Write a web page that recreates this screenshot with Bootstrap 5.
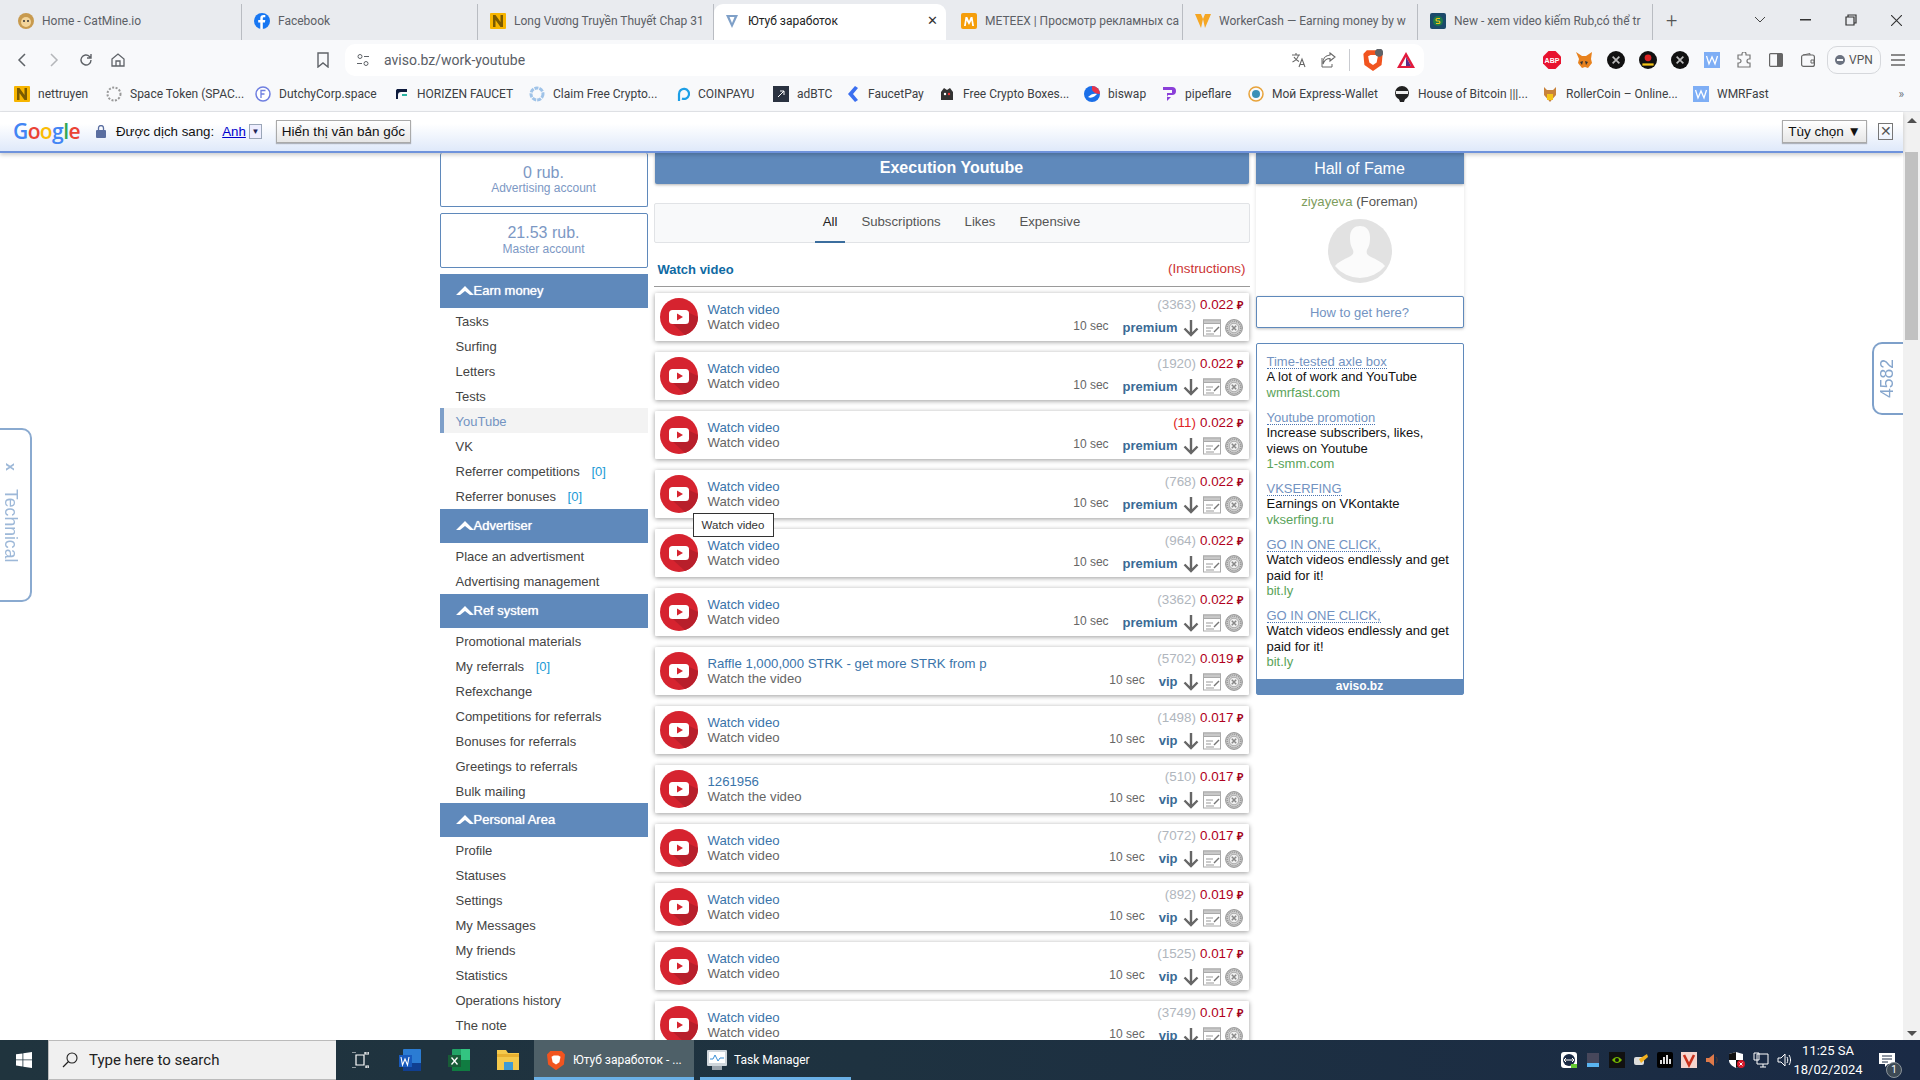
<!doctype html>
<html lang="en">
<head>
<meta charset="utf-8">
<title>Youtube work</title>
<link href="https://cdn.jsdelivr.net/npm/bootstrap@5.3.0/dist/css/bootstrap.min.css" rel="stylesheet">
<style>
html,body{height:100%;overflow:hidden}
body{width:1920px;height:1080px;font-family:"Liberation Sans",Arial,sans-serif;font-size:13px;color:#333;background:#fff;display:flex;flex-direction:column}
svg{display:block;flex:none}
.ui-font{font-family:Roboto,"Noto Sans",sans-serif}
/* tab strip */
.tabstrip{height:40px;background:#e9ebef;flex:none;display:grid;grid-template-columns:236px 236px 236px 235px 234px 235px 235px 21px 1fr;padding-left:6px;font-size:12px;color:#5c6066}
.tabcell{height:36px;margin-top:4px;padding:0 0 2px 12px;display:flex;align-items:center;gap:8px;border-right:1px solid #b9bcc2;white-space:nowrap;overflow:hidden;position:relative}
.tabcell.tab-active{background:#fff;border-radius:9px 9px 0 0;border-right:0;color:#222;margin-right:3px;padding-left:10px}
.tabclose{margin-left:auto;margin-right:8px;font-size:13px;color:#333}
.tabadd{font-size:20px;color:#555;line-height:40px;font-weight:300;padding-left:13px}
.wincontrols{display:flex;align-items:center;justify-content:flex-end;gap:34px;padding-right:18px;color:#333}
/* toolbar */
.toolbar{height:40px;background:#f8f9fb;flex:none;display:flex;align-items:center;padding-left:14px;color:#5f6368}
.navicons{display:flex;align-items:center;gap:16px;width:320px}
.bookmark-ic{margin-left:auto;margin-right:4px}
.addr{width:1079px;height:32px;background:#fff;border-radius:10px;margin-left:11px;display:flex;align-items:center;padding:0 8px 0 11px;font-size:14px;color:#5a5e66}
.addr-url{margin-left:14px}
.toolright{display:flex;align-items:center;gap:13px;margin-left:auto}
.extensions{display:flex;align-items:center;gap:14px;margin-left:auto;padding-right:15px}
.vpn{width:54px;height:28px;border:1px solid #d6d8dc;border-radius:10px;display:flex;align-items:center;justify-content:center;gap:4px;font-size:12px;color:#555;margin:0 -4px}
/* bookmarks */
.bmarks{height:32px;flex:none;background:#f8f9fb;border-bottom:1px solid #e3e5e9;display:grid;grid-template-columns:92px 149px 140px 134px 145px 99px 73px 93px 145px 77px 87px 146px 148px 151px 190px 1fr;padding:0 0 3px 14px;font-size:12px;color:#3c4043;align-items:center}
.bmark{display:flex;align-items:center;gap:8px;white-space:nowrap}
/* main */
.mainwrap{flex:1;min-height:0;display:flex;position:relative}
.viewcol{flex:1;min-width:0;display:flex;flex-direction:column}
.transbar{height:41px;flex:none;background:linear-gradient(#fff 30%,#dfe9fa);border-bottom:2px solid #6f93dc;box-shadow:0 2px 4px rgba(0,0,0,.2);display:flex;align-items:center;padding-left:13px;color:#111;font-size:13.3px;position:relative;z-index:2}
.glogo{font-family:"Open Sans",sans-serif;font-size:21px;font-weight:600;letter-spacing:-.6px;width:83px;line-height:1;margin-top:-1px}
.g-b{color:#4285f4}.g-r{color:#ea4335}.g-y{color:#fbbc05}.g-g{color:#34a853}
.lock-ic{margin-right:10px}
.tr-link{color:#00c;text-decoration:underline;margin-left:8px}
.tr-drop{width:13px;height:15px;border:1px solid #9aa6b8;margin:0 14px 0 3px;font-size:8px;text-align:center;line-height:13px;color:#225;background:#eef}
.tr-btn{height:23px;border:1px solid #aaa;background:linear-gradient(#fff,#e6e6e6);box-shadow:0 1px 1px rgba(0,0,0,.25);padding:0 5px;line-height:22px;color:#111;white-space:nowrap;font-size:13.5px}
.tr-x{width:15px;height:17px;border:1px solid #777;color:#555;margin:0 10px 0 11px;text-align:center;line-height:15px;font-size:14px}
.vscroll{width:17px;flex:none;background:#f1f1f1;display:flex;flex-direction:column;align-items:center}
.vthumb{width:13px;height:188px;background:#c1c1c1;margin-top:29px}
.varrow{margin-top:6px;width:0;height:0;border:5px solid transparent;border-top:0;border-bottom:5px solid #505050;position:relative}
.varrow-d{margin-top:auto;margin-bottom:4px;border-bottom:0;border-top:5px solid #505050}
.site{flex:1;min-height:0;overflow:hidden;display:flex;justify-content:center;gap:6px;position:relative;background:#fff}
.col-left,.col-right{width:208px;flex:none}
.col-mid{width:596px;flex:none}
/* left */
.balbox{border:1px solid #5f89bb;border-radius:2px;text-align:center;color:#7c98c4;font-size:16px;line-height:18px;background:#fff}
.balbox small{display:block;font-size:12px;line-height:13px}
.bal-a{height:54px;padding-top:11px;margin-bottom:6px;border-top:0}
.bal-b{height:55px;padding-top:10px;margin-bottom:6px}
.bal-b small{margin-top:1px}
.sidehead{height:34px;background:#5f89bb;color:#fff;display:flex;align-items:center;padding-left:16px;padding-bottom:1px;font-size:13px;font-weight:500;text-shadow:0 0 1px #fff;line-height:1}
.sidelist{list-style:none;margin:0;padding:0;font-size:13px}
.sidelist li{height:25px;line-height:27px;padding-left:16px;color:#444;white-space:nowrap}
.sidelist li b{font-weight:400;color:#1a9ad6;margin-left:8px}
.sidelist li.cur{background:#f3f3f3;border-left:4px solid #7e9fc9;padding-left:12px;color:#7393c2}
.head-adv{margin-top:1px}
.head-after{margin-top:1px}
/* mid */
.exechead{height:31px;margin:0 1px;background:#5f89bb;color:#fff;font-weight:700;font-size:16px;text-align:center;line-height:30px;border-radius:0 0 2px 2px;box-shadow:0 1px 3px rgba(0,0,0,.3)}
.tabsbox{height:40px;margin-top:19px;background:#f8f9fa;border:1px solid #e1e3e6;border-radius:2px;justify-content:center;font-size:13.2px}
.tabsbox a{color:#555;padding:0 8px;margin:0 4px;height:39px;line-height:36px;text-decoration:none}
.tabsbox a.on{color:#222;border-bottom:2px solid #3b6e9e}
.listhead{height:44px;display:flex;justify-content:space-between;align-items:center;padding:10px 4px 0 4px;border-bottom:1px solid #9a9a9a;font-size:13px;margin-bottom:6px}
.listhead b{color:#0f6aa3}
.listhead span{color:#c33;font-size:13.4px}
.vrow{height:48px;margin:0 1px 11px;background:#fff;box-shadow:0 1px 5px rgba(0,0,0,.4);border-radius:1px;display:flex;align-items:center;padding:0 6px 0 5px;position:relative}
.vtext{margin-left:10px;line-height:15px;font-size:13.2px;color:#666}
.vtext a{display:block;color:#3a74aa;text-decoration:none}
.vright{margin-left:auto;display:flex;flex-direction:column;align-items:flex-end;height:100%;padding-top:4px}
.vtop{font-size:13.4px;line-height:16px;color:#b0b6bd;white-space:nowrap;display:flex;gap:4px}
.vtop i{font-style:normal;color:#e02424}
.vtop em{font-style:normal;color:#b00020}
.vtop b{color:#a00018;font-weight:700;font-size:11px;margin-left:-1px}
.vbot{display:flex;align-items:center;gap:4px;margin-top:4px;height:22px}
.vsec{color:#666;font-size:12px;margin-right:10px;margin-top:-4px}
.vlvl{font-weight:700;color:#3a6a95;font-size:13px;margin-right:1px;margin-top:-1px}
.hovertip{position:absolute;left:38px;top:43px;height:24px;width:81px;border:1px solid #333;background:#fff;color:#333;font-size:11.5px;line-height:22px;text-align:center;z-index:3}
/* right */
.hallhead{height:31px;background:#5f89bb;color:#fff;font-size:16px;text-align:center;line-height:31px;box-shadow:0 1px 3px rgba(0,0,0,.3)}
.hallbody{height:112px;text-align:center;padding-top:10px;font-size:13.2px;line-height:16px;color:#555;box-shadow:0 1px 4px rgba(0,0,0,.12)}
.hallbody b{font-weight:400;color:#7d9c5c}
.avatar{margin:9px auto 0}
.howbtn{height:32px;border:1px solid #5f89bb;border-radius:2px;text-align:center;line-height:31px;color:#7393c2;font-size:13px;box-shadow:0 1px 3px rgba(0,0,0,.25);margin-bottom:15px;background:#fff}
.adsbox{border:1px solid #5f89bb;border-radius:2px;height:352px;display:flex;flex-direction:column;font-size:13px;line-height:15.4px;color:#111}
.adsbody{flex:1;padding:10px 10px 0}
.adblock{margin-bottom:9.6px}
.adblock a{color:#7393c2;text-decoration:none;border-bottom:1px dotted #4a74b0;display:inline-block;line-height:13.4px}
.adblock u{display:block;text-decoration:none;color:#5aa35a}
.adsfoot{height:16px;background:#5f89bb;color:#fff;text-align:center;line-height:15px;font-weight:700;font-size:12px}
/* floating */
.floatl{position:absolute;left:-2px;top:316px;width:34px;height:174px;border:2px solid #8aaad0;border-radius:0 10px 10px 0;color:#9db8d8;background:#fff;z-index:1;display:flex;flex-direction:column;align-items:flex-start;padding-top:33px;gap:18px;filter:blur(.3px)}
.floatl span{writing-mode:vertical-rl;width:22px;line-height:22px;font-size:17.6px}
.floatl .fl-x{font-weight:700;font-size:14px}
.floatr{position:absolute;left:1872px;top:230px;width:31px;height:73px;border:2px solid #7ea0ca;border-right:0;border-radius:10px 0 0 10px;color:#86a6cd;font-size:17.5px;writing-mode:vertical-rl;text-align:center;z-index:1;background:#fff}
.floatr span{display:block;transform:rotate(180deg);line-height:31px}
/* taskbar */
.taskbar{height:40px;flex:none;background:linear-gradient(90deg,#20343e,#1e3240 45%,#1a2a45);display:flex;align-items:stretch;color:#fff;font-size:12px}
.startbtn{width:48px;display:flex;align-items:center;justify-content:center}
.tsearch{width:288px;background:#f0f0f0;border:1px solid #bbb;border-width:1px 0 1px 1px;display:flex;align-items:center;padding-left:13px;gap:11px;color:#222;font-size:15px}
.tbicons{display:flex;align-items:center;width:198px;padding-left:15px;gap:25px}
.tbicons .tv{margin-right:4px}
.tbapp{display:flex;align-items:center;border-bottom:3px solid #6ab0e6;gap:8px;padding-top:3px;white-space:nowrap}
.tbapp-on{width:160px;background:#4e6068;padding-left:13px;margin-right:6px}
.tbapp-off{width:151px;padding-left:5px;gap:5px}
.tray{margin-left:auto;display:flex;align-items:center;gap:8px;padding-right:25px}
.clock{text-align:center;line-height:19px;font-size:13px;margin:0 11px 0 -5px;width:64px;white-space:nowrap;display:flex;flex-direction:column;align-items:center}
.notif{position:relative}
.notif-badge{position:absolute;left:7px;top:9px;width:16px;height:16px;border-radius:50%;background:#3d4a55;border:1px solid #8a939a;font-size:10px;line-height:14px;text-align:center}
</style>
</head>
<body>
<svg width="0" height="0" class="position-absolute">
  <symbol id="yt" viewBox="0 0 38 38"><circle cx="19" cy="19" r="19" fill="#d6232f"/><path d="M13 26l12-13 13 6a19 19 0 0 1-13 18z" fill="#b81f2b"/><rect x="9" y="12" width="20" height="14" rx="3.5" fill="#fff"/><path d="M17 15.500l6 3.500-6 3.500z" fill="#d6232f"/></symbol>
  <symbol id="arr" viewBox="0 0 16 18"><path d="M8 1v15M1.500 9.500L8 16l6.500-6.500" fill="none" stroke="#666" stroke-width="2.400"/></symbol>
  <symbol id="docn" viewBox="0 0 18 18"><rect x=".5" y="1" width="17" height="16" fill="#fff" stroke="#aaa"/><rect x=".5" y="1" width="17" height="3.500" fill="#c8c8c8" stroke="#aaa"/><path d="M3 9h7M3 12h5M3 15h8" stroke="#999"/><path d="M11 13l5-5" stroke="#777" stroke-width="1.500"/></symbol>
  <symbol id="xc" viewBox="0 0 18 18"><circle cx="9" cy="9" r="8.400" fill="#d4d4d4" stroke="#888" stroke-width=".9"/><circle cx="9" cy="9" r="6.800" fill="none" stroke="#9a9a9a" stroke-dasharray="1.200 .8" stroke-width="1.600"/><circle cx="9" cy="9" r="4.800" fill="#efefef" stroke="#999" stroke-width=".8"/><path d="M6.800 6.800l4.400 4.400M11.200 6.800l-4.400 4.400" stroke="#888" stroke-width="1.500"/></symbol>
  <symbol id="chev" viewBox="0 0 18 9"><path d="M0 9L9 0l9 9-4 0-5-4-5 4z" fill="#fff"/></symbol>
  <symbol id="nfav" viewBox="0 0 16 16"><rect width="16" height="16" rx="1" fill="#f7b500"/><path d="M3 14V2h2.500l5 7V2H13v12h-2.500l-5-7v7z" fill="#7a5a00"/></symbol>
  <symbol id="wtile" viewBox="0 0 16 16"><rect width="16" height="16" fill="#7eaef5"/><path d="M2.500 4l2.500 8 3-7 3 7 2.500-8" fill="none" stroke="#fff" stroke-width="1.300"/></symbol>
  <symbol id="brave" viewBox="0 0 16 18"><path d="M3 1h10l3 3-1 9-7 5-7-5-1-9z" fill="#f1541f"/><path d="M8 13l-3-2-1-5 2-1h4l2 1-1 5z" fill="#fff"/></symbol>
  <symbol id="darkx" viewBox="0 0 16 16"><circle cx="8" cy="8" r="8" fill="#111"/><path d="M5 5l6 6M11 5l-6 6" stroke="#bbb" stroke-width="1.500"/></symbol>
</svg>

<div class="tabstrip ui-font">
  <div class="tabcell"><svg width="16" height="16" viewBox="0 0 16 16"><circle cx="8" cy="8" r="8" fill="#c89a4e"/><circle cx="8" cy="9" r="5" fill="#f2d49a"/><circle cx="6" cy="8" r="1" fill="#333"/><circle cx="10" cy="8" r="1" fill="#333"/></svg><span>Home - CatMine.io</span></div>
  <div class="tabcell"><svg width="16" height="16" viewBox="0 0 16 16"><circle cx="8" cy="8" r="8" fill="#1877f2"/><path d="M8.800 16V9.500h2.100l.4-2.500H8.800V5.500c0-.8.3-1.200 1.300-1.200h1.200V2.100C11 2 10.300 2 9.600 2 7.500 2 6.300 3.200 6.300 5.200V7H4.200v2.500h2.100V16z" fill="#fff"/></svg><span>Facebook</span></div>
  <div class="tabcell"><svg width="16" height="16"><use href="#nfav"/></svg><span>Long Vương Truyền Thuyết Chap 31</span></div>
  <div class="tabcell tab-active"><svg width="16" height="16" viewBox="0 0 16 16"><path d="M2 2h12L8 15z" fill="#7fa0c8"/><path d="M5.500 4h5L8 10z" fill="#fff"/></svg><span>Ютуб заработок</span><div class="tabclose">✕</div></div>
  <div class="tabcell"><svg width="16" height="16" viewBox="0 0 16 16"><rect width="16" height="16" rx="2" fill="#f59e0b"/><path d="M3 13l1.500-9h1.800L8 8l1.700-4h1.800l1.500 9h-1.800l-.8-5.500L8 12 5.600 7.500 4.800 13z" fill="#fff"/></svg><span>METEEX | Просмотр рекламных са</span></div>
  <div class="tabcell"><svg width="16" height="16" viewBox="0 0 16 16"><path d="M0 1h6l2 5-2 9zM16 1h-6L8 6l2 9z" fill="#f5a623"/></svg><span>WorkerCash — Earning money by w</span></div>
  <div class="tabcell"><svg width="16" height="16" viewBox="0 0 16 16"><rect width="16" height="16" rx="2" fill="#1b4a6b"/><circle cx="8" cy="8" r="5" fill="#1e7a4a"/><path d="M10 5.500H7a1.300 1.300 0 0 0 0 2.500h2a1.300 1.300 0 0 1 0 2.500H6" fill="none" stroke="#f5c518" stroke-width="1.200"/></svg><span>New - xem video kiếm Rub,có thể tr</span></div>
  <div class="tabadd">+</div>
  <div class="wincontrols">
    <svg width="12" height="8" viewBox="0 0 12 8"><path d="M1 1l5 5 5-5" fill="none" stroke="#444"/></svg>
    <svg width="11" height="2"><rect width="11" height="1.500" fill="#333"/></svg>
    <svg width="12" height="12" viewBox="0 0 12 12"><path d="M3 3V1h8v8H9M1 3h8v8H1z" fill="none" stroke="#333" stroke-width="1.200"/></svg>
    <svg width="11" height="11" viewBox="0 0 11 11"><path d="M0 0l11 11M11 0L0 11" stroke="#333" stroke-width="1.100"/></svg>
  </div>
</div>

<div class="toolbar ui-font">
  <div class="navicons">
    <svg width="16" height="16" viewBox="0 0 16 16"><path d="M11 2L5 8l6 6" fill="none" stroke="#5f6368" stroke-width="1.500"/></svg>
    <svg width="16" height="16" viewBox="0 0 16 16"><path d="M5 2l6 6-6 6" fill="none" stroke="#b4b6ba" stroke-width="1.500"/></svg>
    <svg width="16" height="16" viewBox="0 0 16 16"><path d="M13 8a5 5 0 1 1-1.500-3.600L13 6M13 2v4H9" fill="none" stroke="#5f6368" stroke-width="1.400"/></svg>
    <svg width="16" height="16" viewBox="0 0 16 16"><path d="M2 7l6-5 6 5v7H2zM6 14V9h4v5" fill="none" stroke="#5f6368" stroke-width="1.300"/></svg>
    <svg width="14" height="16" viewBox="0 0 14 16" class="bookmark-ic"><path d="M2 1h10v14l-5-4-5 4z" fill="none" stroke="#5f6368" stroke-width="1.400"/></svg>
  </div>
  <div class="addr">
    <svg width="14" height="14" viewBox="0 0 14 14"><circle cx="4" cy="3.500" r="2" fill="none" stroke="#5f6368"/><path d="M8 3.500h5M1 10.500h5" stroke="#5f6368"/><circle cx="10" cy="10.500" r="2" fill="none" stroke="#5f6368"/></svg>
    <span class="addr-url">aviso.bz/work-youtube</span>
    <div class="toolright">
      <svg width="16" height="16" viewBox="0 0 16 16"><path d="M1 3h8M5 1v2M7.500 3C7 6 4.500 8.500 1.500 10M3 5c1 2 3 3.500 5 4.500M8 15l3-8 3 8M9 12.500h4" fill="none" stroke="#666" stroke-width="1.100"/></svg>
      <svg width="16" height="16" viewBox="0 0 16 16"><path d="M10 1l5 4-5 4V6.500C6 6.500 4 9 3 12c-.5-5 2-8.500 7-9z" fill="none" stroke="#666" stroke-width="1.100"/><path d="M2 6v9h10v-3" fill="none" stroke="#666"/></svg>
      <svg width="1" height="22"><rect width="1" height="22" fill="#c9cbd0"/></svg>
      <svg width="20" height="22" viewBox="0 0 16 18"><use href="#brave" width="16" height="18"/><circle cx="13" cy="3" r="3.400" fill="#5f6368"/></svg>
      <svg width="20" height="18" viewBox="0 0 20 18"><path d="M10 1L1 17h18z" fill="#e2193b"/><path d="M10 6L5 15h10z" fill="#f8f9fb"/><path d="M10 6l5 9H10z" fill="#5a2a86"/></svg>
    </div>
  </div>
  <div class="extensions">
    <svg width="18" height="18" viewBox="0 0 18 18"><path d="M5.500 0h7L18 5.500v7L12.500 18h-7L0 12.500v-7z" fill="#e8132f"/><text x="9" y="12" font-size="7" font-weight="700" fill="#fff" text-anchor="middle" font-family="Liberation Sans">ABP</text></svg>
    <svg width="18" height="18" viewBox="0 0 18 18"><path d="M1 1l6 4h4l6-4-1 7 1 4-4 5-3-1-3 1-4-5 1-4z" fill="#e8821e"/><path d="M5 11l3-1-1 4zM13 11l-3-1 1 4z" fill="#333"/></svg>
    <svg width="18" height="18"><use href="#darkx"/></svg>
    <svg width="18" height="18" viewBox="0 0 16 16"><circle cx="8" cy="8" r="8" fill="#111"/><circle cx="8" cy="6" r="3" fill="#d22"/><path d="M3 11h10v2H3z" fill="#f5c518"/></svg>
    <svg width="18" height="18"><use href="#darkx"/></svg>
    <svg width="18" height="16"><use href="#wtile" x="1" width="16" height="16"/></svg>
    <svg width="18" height="16" viewBox="-1 0 18 16"><path d="M6 2a2 2 0 0 1 4 0v1h4v4h-1a2 2 0 0 0 0 4h1v4H2v-4h1a2 2 0 0 0 0-4H2V3h4z" fill="none" stroke="#777" stroke-width="1.200"/></svg>
    <svg width="18" height="14" viewBox="-2 0 18 14"><rect x=".6" y=".6" width="12.800" height="12.800" rx="1" fill="none" stroke="#666" stroke-width="1.200"/><rect x="8" y="1" width="5" height="12" fill="#666"/></svg>
    <svg width="18" height="14" viewBox="-2 0 18 14"><rect x=".6" y="2" width="12.800" height="11.400" rx="2" fill="none" stroke="#666" stroke-width="1.200"/><path d="M2 2l7-1.400V2M10 7h3v3h-3z" fill="none" stroke="#666"/></svg>
    <div class="vpn"><svg width="10" height="10"><circle cx="5" cy="5" r="5" fill="#6b7280"/><rect x="2" y="4" width="6" height="2" fill="#f8f9fb"/></svg>VPN</div>
    <svg width="14" height="12" viewBox="0 0 14 12"><path d="M0 1h14M0 6h14M0 11h14" stroke="#666" stroke-width="1.300"/></svg>
  </div>
</div>

<div class="bmarks ui-font">
  <div class="bmark"><svg width="16" height="16"><use href="#nfav"/></svg><span>nettruyen</span></div>
  <div class="bmark"><svg width="16" height="16" viewBox="0 0 16 16"><circle cx="8" cy="8" r="6.500" fill="none" stroke="#999" stroke-dasharray="2 1.500" stroke-width="2"/></svg><span>Space Token (SPAC...</span></div>
  <div class="bmark"><svg width="16" height="16" viewBox="0 0 16 16"><circle cx="8" cy="8" r="7" fill="#fff" stroke="#6f7fe0" stroke-width="1.500"/><path d="M6 12V4.500h4.500M6 8h3.500" fill="none" stroke="#6f7fe0" stroke-width="1.300"/></svg><span>DutchyCorp.space</span></div>
  <div class="bmark"><svg width="14" height="16" viewBox="0 0 14 16"><path d="M2 3h10v3H6a3 3 0 0 0-3 3v4H1V6a3 3 0 0 1 1-3z" fill="#0e1b3d"/><path d="M7 8h5v2H7z" fill="#2bb3a3"/></svg><span>HORIZEN FAUCET</span></div>
  <div class="bmark"><svg width="16" height="16" viewBox="0 0 16 16"><circle cx="8" cy="8" r="6" fill="none" stroke="#9fc3e8" stroke-width="3" stroke-dasharray="4 1"/></svg><span>Claim Free Crypto...</span></div>
  <div class="bmark"><svg width="16" height="16" viewBox="0 0 16 16"><path d="M5 15V8a5 5 0 1 1 3 4.500" fill="none" stroke="#1d9fe6" stroke-width="2.200"/></svg><span>COINPAYU</span></div>
  <div class="bmark"><svg width="16" height="16" viewBox="0 0 16 16"><rect width="16" height="16" fill="#2a3240"/><path d="M5 11l6-6M7 5h4v4" fill="none" stroke="#fff"/></svg><span>adBTC</span></div>
  <div class="bmark"><svg width="14" height="16" viewBox="0 0 14 16"><path d="M9 0L2 8l7 8 3-2-5-6 5-6z" fill="#3b6ff0"/></svg><span>FaucetPay</span></div>
  <div class="bmark"><svg width="16" height="16" viewBox="0 0 16 16"><path d="M2 14V6l3-4 3 2 3-2 3 4v8z" fill="#333"/><circle cx="6" cy="8" r="1.200" fill="#fff"/><circle cx="10" cy="8" r="1.200" fill="#e33"/></svg><span>Free Crypto Boxes...</span></div>
  <div class="bmark"><svg width="16" height="16" viewBox="0 0 16 16"><circle cx="8" cy="8" r="8" fill="#1b6fe8"/><path d="M8 0a8 8 0 0 1 8 8c-3 0-6-1-8-4z" fill="#e8344a"/><path d="M4 11c3-3 6-4 9-3-2 2-5 5-9 3z" fill="#fff"/></svg><span>biswap</span></div>
  <div class="bmark"><svg width="16" height="16" viewBox="0 0 16 16"><path d="M2 1h9a4 4 0 0 1 0 8H7l-1 2 4 0-4 4V7h5V4H2z" fill="#8b3fd9"/></svg><span>pipeflare</span></div>
  <div class="bmark"><svg width="16" height="16" viewBox="0 0 16 16"><circle cx="8" cy="8" r="7" fill="none" stroke="#e8a33a" stroke-width="1.500"/><circle cx="8" cy="8" r="4" fill="#3a8fb7"/></svg><span>Мой Express-Wallet</span></div>
  <div class="bmark"><svg width="16" height="16" viewBox="0 0 16 16"><circle cx="8" cy="7" r="7" fill="#222"/><rect x="2" y="5" width="12" height="3" fill="#eee"/><path d="M5 13h6l-1 3H6z" fill="#222"/></svg><span>House of Bitcoin |||...</span></div>
  <div class="bmark"><svg width="16" height="16" viewBox="0 0 16 16"><path d="M2 1l3 3h6l3-3v8l-6 7-6-7z" fill="#c8823a"/><rect x="5" y="8" width="6" height="6" fill="#f5c518"/></svg><span>RollerCoin – Online...</span></div>
  <div class="bmark"><svg width="16" height="16"><use href="#wtile"/></svg><span>WMRFast</span></div>
  <div class="text-end pe-3 text-secondary">»</div>
</div>

<div class="mainwrap">
  <div class="viewcol">
    <div class="transbar">
      <div class="glogo"><span class="g-b">G</span><span class="g-r">o</span><span class="g-y">o</span><span class="g-b">g</span><span class="g-g">l</span><span class="g-r">e</span></div>
      <svg width="10" height="13" viewBox="0 0 10 13" class="lock-ic"><rect y="5" width="10" height="8" rx="1" fill="#5a6ea0"/><path d="M2.500 5V3a2.500 2.500 0 0 1 5 0v2" fill="none" stroke="#5a6ea0" stroke-width="1.300"/></svg>
      <span>Được dịch sang:</span>
      <span class="tr-link">Anh</span>
      <div class="tr-drop">▼</div>
      <div class="tr-btn">Hiển thị văn bản gốc</div>
      <div class="tr-btn ms-auto">Tùy chọn ▼</div>
      <div class="tr-x">✕</div>
    </div>
    <div class="site">
      <aside class="col-left">
        <div class="balbox bal-a">0 rub.<small>Advertising account</small></div>
        <div class="balbox bal-b">21.53 rub.<small>Master account</small></div>
        <div class="sidehead"><svg width="18" height="9"><use href="#chev"/></svg>Earn money</div>
        <ul class="sidelist">
          <li>Tasks</li><li>Surfing</li><li>Letters</li><li>Tests</li><li class="cur">YouTube</li><li>VK</li>
          <li>Referrer competitions <b>[0]</b></li><li>Referrer bonuses <b>[0]</b></li>
        </ul>
        <div class="sidehead head-adv"><svg width="18" height="9"><use href="#chev"/></svg>Advertiser</div>
        <ul class="sidelist"><li>Place an advertisment</li><li>Advertising management</li></ul>
        <div class="sidehead head-after"><svg width="18" height="9"><use href="#chev"/></svg>Ref system</div>
        <ul class="sidelist">
          <li>Promotional materials</li><li>My referrals <b>[0]</b></li><li>Refexchange</li><li>Competitions for referrals</li><li>Bonuses for referrals</li><li>Greetings to referrals</li><li>Bulk mailing</li>
        </ul>
        <div class="sidehead"><svg width="18" height="9"><use href="#chev"/></svg>Personal Area</div>
        <ul class="sidelist">
          <li>Profile</li><li>Statuses</li><li>Settings</li><li>My Messages</li><li>My friends</li><li>Statistics</li><li>Operations history</li><li>The note</li>
        </ul>
      </aside>
      <main class="col-mid">
        <div class="exechead">Execution Youtube</div>
        <nav class="nav tabsbox">
          <a class="on" href="#">All</a><a href="#">Subscriptions</a><a href="#">Likes</a><a href="#">Expensive</a>
        </nav>
        <div class="listhead"><b>Watch video</b><span>(Instructions)</span></div>

        <div class="vrow"><svg width="38" height="38"><use href="#yt"/></svg><div class="vtext"><a href="#">Watch video</a>Watch video</div><div class="vright"><div class="vtop">(3363) <em>0.022</em><b>₽</b></div><div class="vbot"><span class="vsec">10 sec</span><span class="vlvl">premium</span><svg width="16" height="18"><use href="#arr"/></svg><svg width="18" height="18"><use href="#docn"/></svg><svg width="18" height="18"><use href="#xc"/></svg></div></div></div>
        <div class="vrow"><svg width="38" height="38"><use href="#yt"/></svg><div class="vtext"><a href="#">Watch video</a>Watch video</div><div class="vright"><div class="vtop">(1920) <em>0.022</em><b>₽</b></div><div class="vbot"><span class="vsec">10 sec</span><span class="vlvl">premium</span><svg width="16" height="18"><use href="#arr"/></svg><svg width="18" height="18"><use href="#docn"/></svg><svg width="18" height="18"><use href="#xc"/></svg></div></div></div>
        <div class="vrow"><svg width="38" height="38"><use href="#yt"/></svg><div class="vtext"><a href="#">Watch video</a>Watch video</div><div class="vright"><div class="vtop"><i>(11)</i> <em>0.022</em><b>₽</b></div><div class="vbot"><span class="vsec">10 sec</span><span class="vlvl">premium</span><svg width="16" height="18"><use href="#arr"/></svg><svg width="18" height="18"><use href="#docn"/></svg><svg width="18" height="18"><use href="#xc"/></svg></div></div></div>
        <div class="vrow"><svg width="38" height="38"><use href="#yt"/></svg><div class="vtext"><a href="#">Watch video</a>Watch video</div><div class="vright"><div class="vtop">(768) <em>0.022</em><b>₽</b></div><div class="vbot"><span class="vsec">10 sec</span><span class="vlvl">premium</span><svg width="16" height="18"><use href="#arr"/></svg><svg width="18" height="18"><use href="#docn"/></svg><svg width="18" height="18"><use href="#xc"/></svg></div></div><div class="hovertip">Watch video</div></div>
        <div class="vrow"><svg width="38" height="38"><use href="#yt"/></svg><div class="vtext"><a href="#">Watch video</a>Watch video</div><div class="vright"><div class="vtop">(964) <em>0.022</em><b>₽</b></div><div class="vbot"><span class="vsec">10 sec</span><span class="vlvl">premium</span><svg width="16" height="18"><use href="#arr"/></svg><svg width="18" height="18"><use href="#docn"/></svg><svg width="18" height="18"><use href="#xc"/></svg></div></div></div>
        <div class="vrow"><svg width="38" height="38"><use href="#yt"/></svg><div class="vtext"><a href="#">Watch video</a>Watch video</div><div class="vright"><div class="vtop">(3362) <em>0.022</em><b>₽</b></div><div class="vbot"><span class="vsec">10 sec</span><span class="vlvl">premium</span><svg width="16" height="18"><use href="#arr"/></svg><svg width="18" height="18"><use href="#docn"/></svg><svg width="18" height="18"><use href="#xc"/></svg></div></div></div>
        <div class="vrow"><svg width="38" height="38"><use href="#yt"/></svg><div class="vtext"><a href="#">Raffle 1,000,000 STRK - get more STRK from p</a>Watch the video</div><div class="vright"><div class="vtop">(5702) <em>0.019</em><b>₽</b></div><div class="vbot"><span class="vsec">10 sec</span><span class="vlvl">vip</span><svg width="16" height="18"><use href="#arr"/></svg><svg width="18" height="18"><use href="#docn"/></svg><svg width="18" height="18"><use href="#xc"/></svg></div></div></div>
        <div class="vrow"><svg width="38" height="38"><use href="#yt"/></svg><div class="vtext"><a href="#">Watch video</a>Watch video</div><div class="vright"><div class="vtop">(1498) <em>0.017</em><b>₽</b></div><div class="vbot"><span class="vsec">10 sec</span><span class="vlvl">vip</span><svg width="16" height="18"><use href="#arr"/></svg><svg width="18" height="18"><use href="#docn"/></svg><svg width="18" height="18"><use href="#xc"/></svg></div></div></div>
        <div class="vrow"><svg width="38" height="38"><use href="#yt"/></svg><div class="vtext"><a href="#">1261956</a>Watch the video</div><div class="vright"><div class="vtop">(510) <em>0.017</em><b>₽</b></div><div class="vbot"><span class="vsec">10 sec</span><span class="vlvl">vip</span><svg width="16" height="18"><use href="#arr"/></svg><svg width="18" height="18"><use href="#docn"/></svg><svg width="18" height="18"><use href="#xc"/></svg></div></div></div>
        <div class="vrow"><svg width="38" height="38"><use href="#yt"/></svg><div class="vtext"><a href="#">Watch video</a>Watch video</div><div class="vright"><div class="vtop">(7072) <em>0.017</em><b>₽</b></div><div class="vbot"><span class="vsec">10 sec</span><span class="vlvl">vip</span><svg width="16" height="18"><use href="#arr"/></svg><svg width="18" height="18"><use href="#docn"/></svg><svg width="18" height="18"><use href="#xc"/></svg></div></div></div>
        <div class="vrow"><svg width="38" height="38"><use href="#yt"/></svg><div class="vtext"><a href="#">Watch video</a>Watch video</div><div class="vright"><div class="vtop">(892) <em>0.019</em><b>₽</b></div><div class="vbot"><span class="vsec">10 sec</span><span class="vlvl">vip</span><svg width="16" height="18"><use href="#arr"/></svg><svg width="18" height="18"><use href="#docn"/></svg><svg width="18" height="18"><use href="#xc"/></svg></div></div></div>
        <div class="vrow"><svg width="38" height="38"><use href="#yt"/></svg><div class="vtext"><a href="#">Watch video</a>Watch video</div><div class="vright"><div class="vtop">(1525) <em>0.017</em><b>₽</b></div><div class="vbot"><span class="vsec">10 sec</span><span class="vlvl">vip</span><svg width="16" height="18"><use href="#arr"/></svg><svg width="18" height="18"><use href="#docn"/></svg><svg width="18" height="18"><use href="#xc"/></svg></div></div></div>
        <div class="vrow"><svg width="38" height="38"><use href="#yt"/></svg><div class="vtext"><a href="#">Watch video</a>Watch video</div><div class="vright"><div class="vtop">(3749) <em>0.017</em><b>₽</b></div><div class="vbot"><span class="vsec">10 sec</span><span class="vlvl">vip</span><svg width="16" height="18"><use href="#arr"/></svg><svg width="18" height="18"><use href="#docn"/></svg><svg width="18" height="18"><use href="#xc"/></svg></div></div></div>
      </main>
      <aside class="col-right">
        <div class="hallhead">Hall of Fame</div>
        <div class="hallbody"><b>ziyayeva</b> (Foreman)
          <svg class="avatar" width="64" height="64" viewBox="0 0 64 64"><circle cx="32" cy="32" r="32" fill="#e2e2e2"/><path d="M22 18c0-8 5-11 10-11s10 3 10 11c0 7-1 9-3 13-1 3 0 5 4 7 6 3 11 5 14 9a32 32 0 0 1-50 0c3-4 8-6 14-9 4-2 5-4 4-7-2-4-3-6-3-13z" fill="#fbfbfb"/></svg>
        </div>
        <div class="howbtn">How to get here?</div>
        <div class="adsbox">
          <div class="adsbody">
            <div class="adblock"><a href="#">Time-tested axle box</a><div>A lot of work and YouTube</div><u>wmrfast.com</u></div>
            <div class="adblock"><a href="#">Youtube promotion</a><div>Increase subscribers, likes, views on Youtube</div><u>1-smm.com</u></div>
            <div class="adblock"><a href="#">VKSERFING</a><div>Earnings on VKontakte</div><u>vkserfing.ru</u></div>
            <div class="adblock"><a href="#">GO IN ONE CLICK,</a><div>Watch videos endlessly and get paid for it!</div><u>bit.ly</u></div>
            <div class="adblock"><a href="#">GO IN ONE CLICK,</a><div>Watch videos endlessly and get paid for it!</div><u>bit.ly</u></div>
          </div>
          <div class="adsfoot">aviso.bz</div>
        </div>
      </aside>
    </div>
  </div>
  <div class="vscroll"><div class="varrow"></div><div class="vthumb"></div><div class="varrow varrow-d"></div></div>
  <div class="floatl"><span class="fl-x">x</span><span>Technical</span></div>
  <div class="floatr"><span>4582</span></div>
</div>

<footer class="taskbar ui-font">
  <div class="startbtn"><svg width="16" height="16" viewBox="0 0 16 16"><path d="M0 2.300l6.500-.9v6.100H0zM7.300 1.300L16 0v7.500H7.300zM0 8.300h6.500v6.200L0 13.600zM7.300 8.300H16V16l-8.700-1.200z" fill="#fff"/></svg></div>
  <div class="tsearch"><svg width="16" height="16" viewBox="0 0 16 16"><circle cx="10" cy="6" r="5" fill="none" stroke="#222" stroke-width="1.100"/><path d="M6.500 9.500L1 15" stroke="#222" stroke-width="1.300"/></svg>Type here to search</div>
  <div class="tbicons">
    <svg width="18" height="16" viewBox="0 0 18 16" class="tv"><path d="M5 3h8v10H5zM1 0h4M1 16h4M14 0h4v2h-4zM15 14h3v2h-3z" fill="none" stroke="#fff" stroke-width="1.200"/></svg>
    <svg width="24" height="24" viewBox="0 0 24 24"><rect x="5" y="1" width="18" height="22" rx="1" fill="#2b7cd3"/><rect x="5" y="15" width="18" height="8" fill="#103f91"/><rect x="1" y="7" width="13" height="12" fill="#185abd"/><path d="M3 9l1.500 8L7 11l2.500 6L11 9" fill="none" stroke="#fff" stroke-width="1.100"/></svg>
    <svg width="24" height="24" viewBox="0 0 24 24"><rect x="5" y="1" width="18" height="22" rx="1" fill="#21a366"/><rect x="14" y="1" width="9" height="11" fill="#33c481"/><rect x="5" y="12" width="18" height="11" fill="#107c41"/><rect x="1" y="7" width="13" height="12" fill="#185c37"/><path d="M4.500 9.500l6 7M10.500 9.500l-6 7" stroke="#fff" stroke-width="1.300"/></svg>
    <svg width="24" height="22" viewBox="0 0 24 22"><path d="M1 1h9l2 3h11v17H1z" fill="#f5c94c"/><rect x="1" y="5" width="22" height="3" fill="#e8b030"/><rect x="8" y="13" width="9" height="8" fill="#3f9bd6"/></svg>
  </div>
  <div class="tbapp tbapp-on"><svg width="18" height="24" viewBox="0 0 16 18"><use href="#brave" width="16" height="18"/></svg><span>Ютуб заработок - ...</span></div>
  <div class="tbapp tbapp-off"><svg width="24" height="24" viewBox="0 0 24 24"><rect x="2" y="2" width="20" height="16" rx="1" fill="#cfd6dc"/><rect x="4" y="4" width="16" height="11" fill="#fff"/><path d="M5 11h3l2-4 3 6 2-3h4" fill="none" stroke="#3a8fd6"/><rect x="7" y="18" width="10" height="4" fill="#9aa4ad"/></svg><span>Task Manager</span></div>
  <div class="tray">
    <svg width="16" height="16" viewBox="0 0 16 16"><rect width="16" height="16" rx="3" fill="#fff"/><circle cx="8" cy="8" r="6" fill="#1a2a44"/><path d="M3 8h10M5 6L3 8l2 2M11 6l2 2-2 2" stroke="#fff"/><rect x="10" y="12" width="6" height="4" fill="#6c3"/></svg>
    <svg width="16" height="16" viewBox="0 0 16 16"><rect x="2" y="1" width="12" height="14" fill="#333"/><rect x="2" y="1" width="12" height="10" fill="#557" opacity=".6"/><rect x="2" y="11" width="12" height="4" fill="#5ab4f0"/></svg>
    <svg width="16" height="16" viewBox="0 0 16 16"><rect width="16" height="16" fill="#111"/><path d="M3 8c3-4 7-4 10 0-3 4-7 4-10 0z" fill="#76b900"/><circle cx="8" cy="8" r="2" fill="#111"/></svg>
    <svg width="16" height="16" viewBox="0 0 16 16"><rect x="1" y="5" width="10" height="8" rx="2" fill="#ddd"/><path d="M6 7l8-5 1 3-7 6z" fill="#f2b01e"/></svg>
    <svg width="16" height="16" viewBox="0 0 16 16"><rect width="16" height="16" rx="2" fill="#000"/><path d="M3 12V8h2v4zM6 12V5h2v7zM9 12V3h2v9zM12 12V7h2v5z" fill="#ddd"/></svg>
    <svg width="16" height="16" viewBox="0 0 16 16"><rect width="16" height="16" fill="#f6d4cd"/><path d="M3 3l5 10 5-10" fill="none" stroke="#c8301c" stroke-width="2.600"/></svg>
    <svg width="16" height="16" viewBox="0 0 16 16"><path d="M1 6h3l5-4v12l-5-4H1z" fill="#e07a4a"/><path d="M11 5c1.500 2 1.500 4 0 6" stroke="#5a3a30" fill="none"/></svg>
    <svg width="16" height="16" viewBox="0 0 16 16"><path d="M7 0l7 2v6c0 4-3 6-7 8-4-2-7-4-7-8V2z" fill="#fff"/><path d="M7 0v8H0V2zM7 8h7c0 4-3 6-7 8z" fill="#111"/><circle cx="12" cy="12" r="4" fill="#d8192a"/><path d="M10.500 10.500l3 3M13.500 10.500l-3 3" stroke="#fff"/></svg>
    <svg width="16" height="16" viewBox="0 0 16 16"><path d="M4 2h11v10H4zM1 1h5v7H1zM7 15h6M10 12v3" fill="#1a2a44" stroke="#fff"/></svg>
    <svg width="16" height="16" viewBox="0 0 16 16"><path d="M1 6h3l4-4v12l-4-4H1zM10 5c1 2 1 4 0 6M12 3c2 3 2 7 0 10" fill="none" stroke="#fff"/></svg>
    <div class="clock"><span>11:25 SA</span><span>18/02/2024</span></div>
    <div class="notif"><svg width="16" height="14" viewBox="0 0 16 14"><path d="M0 0h16v11H9l-3 3v-3H0z" fill="#fff"/><path d="M3 3h10M3 6h10M3 9h6" stroke="#1a2a44"/></svg><div class="notif-badge">1</div></div>
  </div>
</footer>
</body>
</html>
